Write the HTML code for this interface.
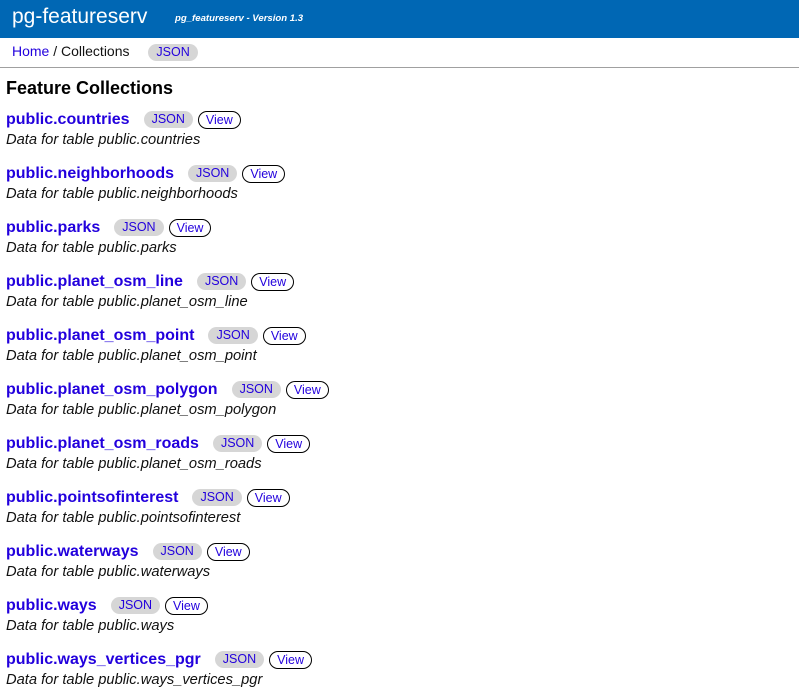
<!DOCTYPE html>
<html><head><meta charset="utf-8"><style>
*{margin:0;padding:0;box-sizing:border-box}
body{width:799px;height:698px;overflow:hidden;background:#fff;font-family:"Liberation Sans",Arial,sans-serif;position:relative}
.hdr{position:absolute;left:0;top:0;width:799px;height:38px;background:#0067b4;color:#fff}
.hdr .t{position:absolute;left:12px;top:5px;font-size:21px}
.hdr .v{position:absolute;left:175px;top:13px;font-size:9.6px;font-style:italic;font-weight:bold}
.nav{position:absolute;left:12px;top:43px;font-size:14px;color:#111}
.nav a{color:#2200dd;text-decoration:none}
.pill{display:inline-block;height:17px;line-height:17px;border-radius:9px;background:#d6d6d6;color:#2200dd;font-size:12.5px;padding:0 8px;font-weight:normal;font-style:normal;vertical-align:middle}
.view{display:inline-block;height:18px;line-height:16px;border-radius:9px;border:1px solid #000;background:#fff;color:#2200dd;font-size:12.5px;padding:0 7px;font-weight:normal;vertical-align:middle;margin-left:5px}
.line{position:absolute;left:0;top:67px;width:799px;height:1px;background:#a0a0a0}
h1{position:absolute;left:6px;top:78px;font-size:18px;font-weight:bold;color:#000}
.it{position:absolute;left:6px}
.it .n{font-size:16px;font-weight:bold;color:#2200dd;height:20px;line-height:20px;white-space:nowrap}
.it .n .pill{margin-left:14px}
.it .d{font-size:14.7px;font-style:italic;color:#111;height:20px;line-height:20px;white-space:nowrap}
</style></head><body>
<div class="hdr"><span class="t">pg-featureserv</span><span class="v">pg_featureserv - Version 1.3</span></div>
<div class="nav"><a>Home</a> / Collections <span class="pill" style="margin-left:15px">JSON</span></div>
<div class="line"></div>
<h1>Feature Collections</h1>
<div class="it" style="top:110px"><div class="n">public.countries<span class="pill">JSON</span><span class="view">View</span></div><div class="d">Data for table public.countries</div></div>
<div class="it" style="top:164px"><div class="n">public.neighborhoods<span class="pill">JSON</span><span class="view">View</span></div><div class="d">Data for table public.neighborhoods</div></div>
<div class="it" style="top:218px"><div class="n">public.parks<span class="pill">JSON</span><span class="view">View</span></div><div class="d">Data for table public.parks</div></div>
<div class="it" style="top:272px"><div class="n">public.planet_osm_line<span class="pill">JSON</span><span class="view">View</span></div><div class="d">Data for table public.planet_osm_line</div></div>
<div class="it" style="top:326px"><div class="n">public.planet_osm_point<span class="pill">JSON</span><span class="view">View</span></div><div class="d">Data for table public.planet_osm_point</div></div>
<div class="it" style="top:380px"><div class="n">public.planet_osm_polygon<span class="pill">JSON</span><span class="view">View</span></div><div class="d">Data for table public.planet_osm_polygon</div></div>
<div class="it" style="top:434px"><div class="n">public.planet_osm_roads<span class="pill">JSON</span><span class="view">View</span></div><div class="d">Data for table public.planet_osm_roads</div></div>
<div class="it" style="top:488px"><div class="n">public.pointsofinterest<span class="pill">JSON</span><span class="view">View</span></div><div class="d">Data for table public.pointsofinterest</div></div>
<div class="it" style="top:542px"><div class="n">public.waterways<span class="pill">JSON</span><span class="view">View</span></div><div class="d">Data for table public.waterways</div></div>
<div class="it" style="top:596px"><div class="n">public.ways<span class="pill">JSON</span><span class="view">View</span></div><div class="d">Data for table public.ways</div></div>
<div class="it" style="top:650px"><div class="n">public.ways_vertices_pgr<span class="pill">JSON</span><span class="view">View</span></div><div class="d">Data for table public.ways_vertices_pgr</div></div>
</body></html>
